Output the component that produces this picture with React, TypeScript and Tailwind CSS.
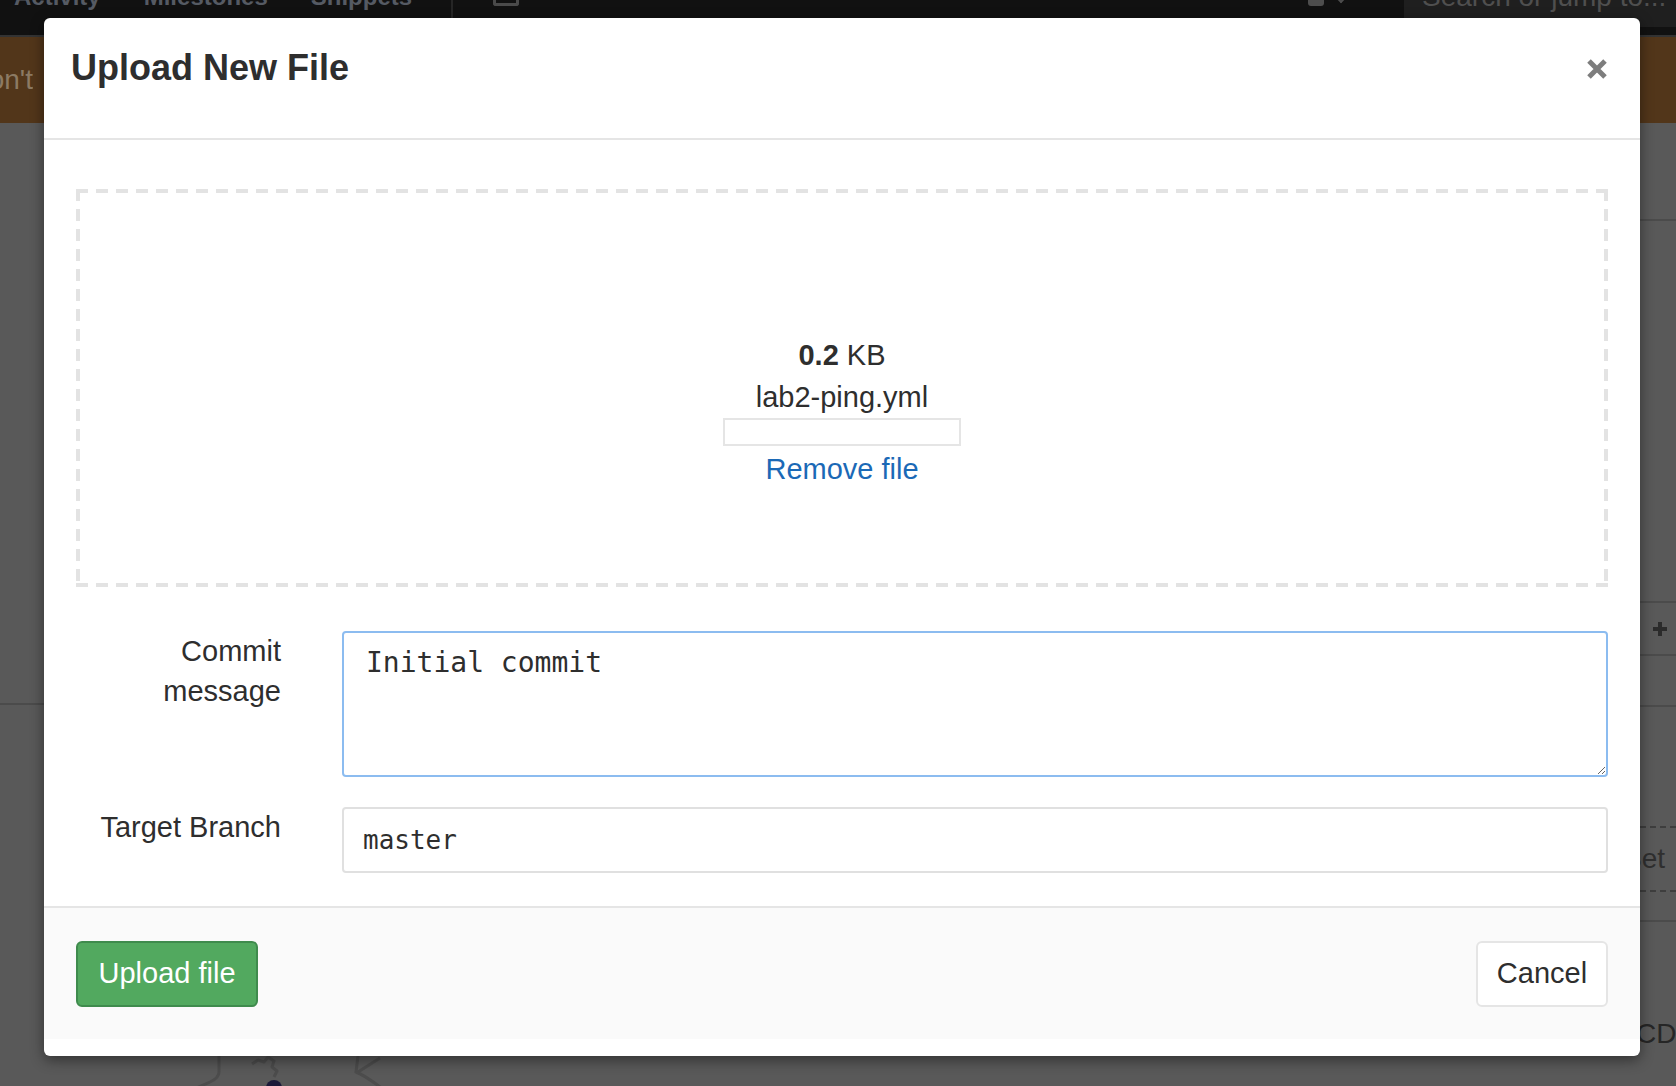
import { useState } from "react";

const sans = "font-['Liberation_Sans',Arial,sans-serif]";
const mono = "font-['DejaVu_Sans_Mono',Menlo,monospace]";

// 12px dash / 8px gap, 4px thick, drawn with gradients so the dash length matches
const dashedBox =
  "[background-image:linear-gradient(to_right,#e3e3e3_12px,transparent_12px),linear-gradient(to_right,#e3e3e3_12px,transparent_12px),linear-gradient(to_bottom,#e3e3e3_12px,transparent_12px),linear-gradient(to_bottom,#e3e3e3_12px,transparent_12px)] [background-size:20px_4px,20px_4px,4px_20px,4px_20px] [background-position:0_0,0_100%,0_0,100%_0] [background-repeat:repeat-x,repeat-x,repeat-y,repeat-y]";

function PageBehind() {
  return (
    <div className="flex h-full w-full flex-col">
      {/* top navbar, mostly scrolled off */}
      <div className="flex h-[35px] items-start overflow-hidden bg-[#111111]">
        <div className="flex items-start gap-[43px] pl-[14px] text-[24px] font-bold leading-[28px] text-[#555a63] -mt-[17px]">
          <span>Activity</span>
          <span>Milestones</span>
          <span>Snippets</span>
        </div>
        <div className="ml-[39px] h-full border-l-2 border-[#262626]" />
        <div className="ml-[40px] h-[14px] w-[26px] rounded-b-[3px] border-x-[3px] border-b-[3px] border-[#4a4a4a] -mt-[8px]" />
        <div className="ml-auto flex items-start">
          <div className="mr-[14px] flex items-start gap-[14px] -mt-[10px]">
            <div className="h-[16px] w-[16px] rounded-[3px] bg-[#4d4d4d]" />
            <div className="mt-[6px] h-[6px] w-[6px] rotate-45 border-b-2 border-r-2 border-[#4d4d4d]" />
          </div>
          <div className="ml-[46px] h-[27px] w-[272px] overflow-hidden bg-[#1f1f1f] pl-[18px]">
            <div className="text-[28px] leading-[32px] text-[#4f4f4f] -mt-[19px]">Search or jump to...</div>
          </div>
        </div>
      </div>
      <div className="h-[2px] bg-[#333333]" />
      {/* dimmed warning banner */}
      <div className="flex h-[86px] items-center bg-[#52361a]">
        <div className="flex w-[33px] justify-end overflow-hidden">
          <span className="whitespace-nowrap text-[28px] text-[#8c7a63]">Don't</span>
        </div>
      </div>
      {/* page body, only the edges show around the modal */}
      <div className="flex flex-1">
        <div className="flex w-[44px] flex-col">
          <div className="h-[582px] border-b-2 border-[#4b4b4b]" />
        </div>
        <div className="flex flex-1 flex-col justify-end pl-[146px]">
          <svg width="210" height="30" viewBox="0 0 210 30" fill="none">
            <path d="M29 0 L29 16 Q29 22 20 26 L2 34" stroke="#4c4c4c" strokeWidth="3" />
            <path d="M62 8 l6 -4 l6 2 l4 -5 l6 4 l-2 6 l5 4 l-3 6" stroke="#4c4c4c" strokeWidth="3" strokeLinejoin="round" />
            <circle cx="84" cy="32" r="8" fill="#1c1a3a" />
            <path d="M168 0 L166 16 Q176 20 194 34" stroke="#4c4c4c" strokeWidth="3" />
            <path d="M168 16 L190 2" stroke="#4c4c4c" strokeWidth="3" />
          </svg>
        </div>
        <div className="flex w-[36px] flex-col text-[#2f2f2f]">
          <div className="h-[98px] border-b-2 border-[#4b4b4b]" />
          <div className="h-[382px] border-b-2 border-[#4b4b4b]" />
          <div className="flex h-[53px] items-center border-b-2 border-[#4b4b4b] pl-[12px]">
            <svg width="16" height="16" viewBox="0 0 16 16">
              <path d="M8 1 V15 M1 8 H15" stroke="#2b2b2b" strokeWidth="4" />
            </svg>
          </div>
          <div className="h-[51px] border-b-2 border-[#4b4b4b]" />
          <div className="h-[121px] border-b-2 border-dashed border-[#3e3e3e]" />
          <div className="flex h-[64px] items-center overflow-hidden border-b-2 border-dashed border-[#3e3e3e]">
            <span className="-ml-[17px] text-[28px] text-[#2f2f2f]">Set</span>
          </div>
          <div className="h-[30px] border-b-2 border-[#4b4b4b]" />
          <div className="flex-1 overflow-hidden pt-[92px]">
            <span className="-ml-[4px] block text-[28px] leading-[40px] text-[#262626]">CD</span>
          </div>
        </div>
      </div>
    </div>
  );
}

function UploadModal() {
  const [message, setMessage] = useState("Initial commit");
  const [branch, setBranch] = useState("master");

  return (
    <div className="absolute left-[44px] top-[18px] w-[1596px] rounded-[6px] bg-white pb-[17px] shadow-[0_4px_14px_rgba(0,0,0,0.45)]">
      <div className="flex h-[122px] items-start justify-between border-b-2 border-[#e5e5e5] pl-[27px] pr-[32px] pt-[30px]">
        <h2 className="text-[36px] font-bold leading-[40px] text-[#2e2e2e]">Upload New File</h2>
        <button className="mt-[10px]" aria-label="Close">
          <svg width="22" height="22" viewBox="0 0 22 22">
            <path d="M3 3 L19 19 M19 3 L3 19" stroke="#7d7d7d" strokeWidth="5" />
          </svg>
        </button>
      </div>

      <div className="px-8 pb-[33px] pt-[49px]">
        {/* dropzone with the queued file */}
        <div className={`flex h-[398px] flex-col items-center pt-[145px] text-[29px] text-[#2e2e2e] ${dashedBox}`}>
          <div className="leading-[42px]">
            <span className="font-bold">0.2</span> KB
          </div>
          <div className="leading-[42px]">lab2-ping.yml</div>
          <div className="h-[28px] w-[238px] border-2 border-[#e5e5e5]" />
          <a href="#" className="mt-[3px] leading-[40px] text-[#1b69b6]">
            Remove file
          </a>
        </div>

        <div className="mt-[44px] flex flex-col gap-[30px] text-[29px] text-[#2e2e2e]">
          <div className="flex gap-[61px]">
            <label className="w-[205px] text-right leading-[40px]">
              Commit
              <br />
              message
            </label>
            <textarea
              value={message}
              onChange={(e) => setMessage(e.target.value)}
              className={`h-[146px] flex-1 rounded-[4px] border-2 border-[#8cbcf0] px-[22px] pt-[10px] text-[28px] leading-[40px] text-[#2e2e2e] outline-none ${mono}`}
            />
          </div>
          <div className="flex gap-[61px]">
            <label className="w-[205px] text-right leading-[40px]">Target Branch</label>
            <input
              value={branch}
              onChange={(e) => setBranch(e.target.value)}
              className={`h-[66px] flex-1 rounded-[4px] border-2 border-[#e0e0e0] px-[19px] text-[26px] leading-[40px] text-[#2e2e2e] outline-none ${mono}`}
            />
          </div>
        </div>
      </div>

      <div className="flex items-center justify-between border-t-2 border-[#e5e5e5] bg-[#fafafa] px-8 pb-[32px] pt-[33px]">
        <button className="h-[66px] w-[182px] rounded-[6px] border-2 border-[#3f8b4d] bg-[#52a95f] text-[29px] text-white">
          Upload file
        </button>
        <button className="h-[66px] w-[132px] rounded-[6px] border-2 border-[#e5e5e5] bg-white text-[29px] text-[#2e2e2e]">
          Cancel
        </button>
      </div>
    </div>
  );
}

export default function App() {
  return (
    <div className={`relative h-[1086px] w-[1676px] overflow-hidden bg-[#595959] ${sans}`}>
      <PageBehind />
      <UploadModal />
    </div>
  );
}
